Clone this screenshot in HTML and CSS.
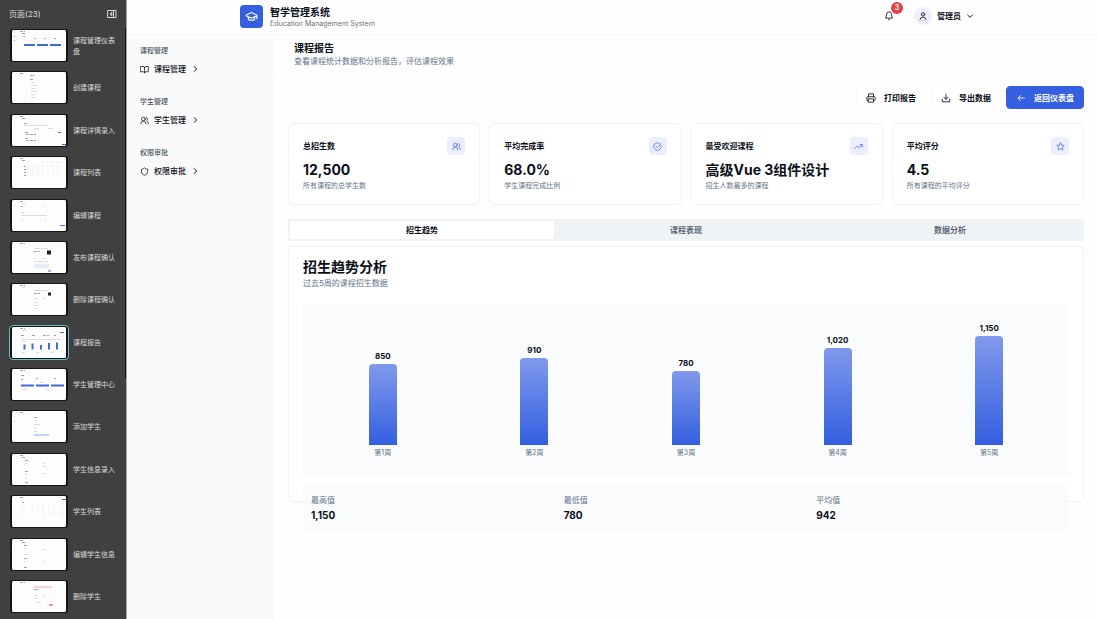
FILE: index.html
```html
<!DOCTYPE html>
<html lang="zh-CN">
<head>
  <meta charset="UTF-8">
  <meta name="viewport" content="width=device-width, initial-scale=1">
  <title>课程报告</title>
  <link rel="stylesheet" href="styles.css">
</head>
<body>
  <aside class="pages">
    <div class="pages-head">
      <span>页面(23)</span>
      <button class="icon-btn" aria-label="收起">
        <svg width="10" height="10" viewBox="0 0 10 10"><path d="M1 1.500h8v7H1zM6.500 1.500v7M4.500 3.500 3 5l1.500 1.500z"/></svg>
      </button>
    </div>
    <nav class="pages-list">
      <a href="#" class="page-item">
        <svg class="thumb" viewBox="0 0 54 30"><path class="ink" d="M8 1h5M10 3h3M11 6h2M22 8h2M32 8h2M42 8h2M2 6h1M2 10h1"/><path class="blue wide" d="M12 14.500h11M25 14.500h11M38 14.500h11"/></svg>
        <span>课程管理仪表盘</span>
      </a>
      <a href="#" class="page-item">
        <svg class="thumb" viewBox="0 0 54 30"><path class="ink" d="M8 1h4M18 3h5M18 7h3"/><path class="pale" d="M19 10h4M19 13h6M19 16h4M19 19h6M19 22h4M19 25h5"/></svg>
        <span>创建课程</span>
      </a>
      <a href="#" class="page-item">
        <svg class="thumb" viewBox="0 0 54 30"><path class="ink" d="M8 1h4M10 3h3M12 8h3M13 17h3M14 19h10M13 23h3M14 25h10"/><path class="pale" d="M2 6h1M2 11h1M12 10h24M22 13h5M36 13h5"/><path class="blue" d="M46 17h3M50 29h4"/></svg>
        <span>课程详情录入</span>
      </a>
      <a href="#" class="page-item">
        <svg class="thumb" viewBox="0 0 54 30"><path class="ink" d="M8 1h4M10 3h3M12 9h2M12 12h2M12 15h2M12 18h2"/><path class="pale cols" d="M16 8v11M21 8v10M26 8v11M31 8v10M36 8v11M41 8v10M46 8v9M35 5h14"/></svg>
        <span>课程列表</span>
      </a>
      <a href="#" class="page-item">
        <svg class="thumb" viewBox="0 0 54 30"><path class="ink" d="M8 1h4M9 6h2"/><path class="pale" d="M2 5h1M10 3h3M9 15h26M9 20h2M32 6h2M32 20h2M9 12h3"/><path class="blue" d="M48 25h5"/></svg>
        <span>编辑课程</span>
      </a>
      <a href="#" class="page-item">
        <svg class="thumb" viewBox="0 0 54 30"><path class="ink" d="M8 1h5M22 9h6"/><path class="pale" d="M2 5h1M22 6h14M22 16h2M31 16h2M22 19h14M2 10h1"/><path class="panel" d="M22 21h15v5H22z"/><path class="block" d="M35 8h4v4h-4z"/><path class="blue" d="M36 28.500h3"/></svg>
        <span>发布课程确认</span>
      </a>
      <a href="#" class="page-item">
        <svg class="thumb" viewBox="0 0 54 30"><path class="ink" d="M8 1h5M22 9h6"/><path class="pale" d="M10 3h3M22 6h14M22 14h3M31 14h2M22 18h4M22 21h5M22 24h3M2 7h1"/><path class="block" d="M36 8h3v3h-3z"/></svg>
        <span>删除课程确认</span>
      </a>
      <a href="#" class="page-item current" aria-current="page">
        <svg class="thumb" viewBox="0 0 54 30"><path class="ink" d="M8 1h5M9 8h3M20 8h3M31 8h6M42 8h2"/><path class="pale" d="M10 3h5M9 12h40M10 14h4"/><path class="blue" d="M48 5h4"/><path class="blue wide" d="M12.500 17v5M20.500 16v6M29 17.500v4.500M37 15.500v6.500M45 15v7"/><path class="pale" d="M10 25h3M24 25h3M39 25h3"/></svg>
        <span>课程报告</span>
      </a>
      <a href="#" class="page-item">
        <svg class="thumb" viewBox="0 0 54 30"><path class="ink" d="M8 1h5M9 6h3M9 10h2M24 9h2M42 9h2"/><path class="pale" d="M2 5h1M2 10h1M10 20h5M34 20h3M28 13h4"/><path class="blue wide" d="M9 16h13M24 16h13M39 16h13"/></svg>
        <span>学生管理中心</span>
      </a>
      <a href="#" class="page-item">
        <svg class="thumb" viewBox="0 0 54 30"><path class="ink" d="M8 1h4M22 6h4"/><path class="pale" d="M2 5h1M2 10h1M10 3h3M22 9h3M22 13h6M22 17h3M22 20h3"/><path class="sky" d="M22 23.500h15"/></svg>
        <span>添加学生</span>
      </a>
      <a href="#" class="page-item">
        <svg class="thumb" viewBox="0 0 54 30"><path class="ink" d="M8 1h4M10 3h3M13 6h3M13 17h3M13 28h3"/><path class="pale" d="M2 6h1M13 9h2M31 9h2M31 12h4M13 20h2M31 19h3M13 24h2"/></svg>
        <span>学生信息录入</span>
      </a>
      <a href="#" class="page-item">
        <svg class="thumb" viewBox="0 0 54 30"><path class="ink" d="M8 1h4M10 6h2"/><path class="pale cols" d="M10 9v11M20 9v10M26 9v9M31 9v10M37 9v10M42 9v9M48 9v10M51 9v10"/><path class="blue" d="M50 3h4"/></svg>
        <span>学生列表</span>
      </a>
      <a href="#" class="page-item">
        <svg class="thumb" viewBox="0 0 54 30"><path class="ink" d="M8 1h4M10 3h3M12 6h3M12 19h3M12 28h3"/><path class="pale" d="M2 6h1M2 10h1M12 9h2M31 10h3M12 15h4M12 22h2M31 22h2"/></svg>
        <span>编辑学生信息</span>
      </a>
      <a href="#" class="page-item">
        <svg class="thumb" viewBox="0 0 54 30"><path class="ink" d="M8 1h5M22 8h5"/><path class="pale" d="M2 5h1M22 14h3M31 14h2M23 17h3M24 21h5"/><path class="pink" d="M22 5.500h18"/><path class="red" d="M37 23.500h4"/></svg>
        <span>删除学生</span>
      </a>
    </nav>
    <span class="pages-scroll"></span>
  </aside>

  <div class="app">
    <header class="topbar">
      <div class="brand">
        <span class="logo">
          <svg width="13" height="13" viewBox="0 0 24 24"><path d="M21.400 10.900a1 1 0 0 0 0-1.800L12.800 5.200a2 2 0 0 0-1.700 0L2.600 9.100a1 1 0 0 0 0 1.800l8.600 3.900a2 2 0 0 0 1.700 0zM22 10v6M6 12.500V16c0 1.700 2.700 3 6 3s6-1.300 6-3v-3.500"/></svg>
        </span>
        <div class="brand-text">
          <div class="brand-name">智学管理系统</div>
          <div class="brand-sub">Education Management System</div>
        </div>
      </div>
      <div class="user-area">
        <button class="icon-btn bell" aria-label="通知">
          <svg width="10" height="10" viewBox="0 0 24 24"><path d="M6 8a6 6 0 0 1 12 0c0 7 3 9 3 9H3s3-2 3-9M10.300 21a2 2 0 0 0 3.400 0"/></svg>
          <span class="badge">3</span>
        </button>
        <button class="user">
          <span class="avatar"><svg width="10" height="10" viewBox="0 0 24 24"><circle cx="12" cy="8" r="4"/><path d="M5 21v-1a6 6 0 0 1 6-5h2a6 6 0 0 1 6 5v1"/></svg></span>
          管理员
          <svg class="chevron" width="8" height="8" viewBox="0 0 24 24"><path d="m5 9 7 7 7-7"/></svg>
        </button>
      </div>
    </header>

    <div class="body">
      <nav class="sidebar">
        <section class="group">
          <h2>课程管理</h2>
          <a href="#">
            <svg width="9" height="9" viewBox="0 0 24 24"><path d="M12 7v14M2 4h6a4 4 0 0 1 4 4 4 4 0 0 1 4-4h6v14h-7a3 3 0 0 0-3 3 3 3 0 0 0-3-3H2z"/></svg>
            课程管理
            <svg class="chevron" width="8" height="8" viewBox="0 0 24 24"><path d="m10 5 7 7-7 7"/></svg>
          </a>
        </section>
        <section class="group">
          <h2>学生管理</h2>
          <a href="#">
            <svg width="9" height="9" viewBox="0 0 24 24"><path d="M2 21a7 7 0 0 1 14 0M22 20c0-3.400-2-6.500-4-8a5 5 0 0 0-.5-8.300"/><circle cx="9" cy="8" r="5"/></svg>
            学生管理
            <svg class="chevron" width="8" height="8" viewBox="0 0 24 24"><path d="m10 5 7 7-7 7"/></svg>
          </a>
        </section>
        <section class="group">
          <h2>权限审批</h2>
          <a href="#">
            <svg width="9" height="9" viewBox="0 0 24 24"><path d="M20 13c0 5-3.500 7.500-8 9-4.500-1.500-8-4-8-9V6c3 0 6-1.500 8-4 2 2.500 5 4 8 4z"/></svg>
            权限审批
            <svg class="chevron" width="8" height="8" viewBox="0 0 24 24"><path d="m10 5 7 7-7 7"/></svg>
          </a>
        </section>
      </nav>

      <main class="main">
        <div class="page-head">
          <h1>课程报告</h1>
          <p>查看课程统计数据和分析报告，评估课程效果</p>
        </div>

        <div class="content">
          <div class="actions">
            <button class="btn">
              <svg width="10" height="10" viewBox="0 0 24 24"><path d="M6 18H4a2 2 0 0 1-2-2v-5a2 2 0 0 1 2-2h16a2 2 0 0 1 2 2v5a2 2 0 0 1-2 2h-2M6 9V2h12v7M6 14h12v8H6z"/></svg>
              打印报告
            </button>
            <button class="btn">
              <svg width="10" height="10" viewBox="0 0 24 24"><path d="M21 15v6H3v-6M7 10l5 5 5-5M12 15V3"/></svg>
              导出数据
            </button>
            <button class="btn btn-primary">
              <svg width="10" height="10" viewBox="0 0 24 24"><path d="m11 18-6-6 6-6M20 12H5"/></svg>
              返回仪表盘
            </button>
          </div>

          <div class="stats">
            <div class="card stat">
              <div class="stat-head">
                <h3>总招生数</h3>
                <span class="stat-icon"><svg width="9" height="9" viewBox="0 0 24 24"><path d="M2 21a7 7 0 0 1 14 0M22 20c0-3.400-2-6.500-4-8a5 5 0 0 0-.5-8.300"/><circle cx="9" cy="8" r="5"/></svg></span>
              </div>
              <div class="stat-value">12,500</div>
              <p>所有课程的总学生数</p>
            </div>
            <div class="card stat">
              <div class="stat-head">
                <h3>平均完成率</h3>
                <span class="stat-icon"><svg width="9" height="9" viewBox="0 0 24 24"><path d="M21.800 10A10 10 0 1 1 17 3.300M8 11l4 4L22 4"/></svg></span>
              </div>
              <div class="stat-value">68.0%</div>
              <p>学生课程完成比例</p>
            </div>
            <div class="card stat">
              <div class="stat-head">
                <h3>最受欢迎课程</h3>
                <span class="stat-icon"><svg width="9" height="9" viewBox="0 0 24 24"><path d="m2 17 6.500-6.500 5 5L22 7M16 7h6v6"/></svg></span>
              </div>
              <div class="stat-value">高级Vue 3组件设计</div>
              <p>招生人数最多的课程</p>
            </div>
            <div class="card stat">
              <div class="stat-head">
                <h3>平均评分</h3>
                <span class="stat-icon"><svg width="9" height="9" viewBox="0 0 24 24"><path d="m12 2 3.100 6.300 6.900 1-5 4.900 1.200 6.800-6.200-3.200L5.800 21 7 14.200 2 9.300l6.900-1z"/></svg></span>
              </div>
              <div class="stat-value">4.5</div>
              <p>所有课程的平均评分</p>
            </div>
          </div>

          <div class="tabs" role="tablist">
            <button role="tab" class="tab active" aria-selected="true">招生趋势</button>
            <button role="tab" class="tab" aria-selected="false">课程表现</button>
            <button role="tab" class="tab" aria-selected="false">数据分析</button>
          </div>

          <section class="card trend">
            <h2>招生趋势分析</h2>
            <p>过去5周的课程招生数据</p>
            <div class="chart">
              <div class="col"><b>850</b><span class="bar" style="height: 81px"></span><span>第1周</span></div>
              <div class="col"><b>910</b><span class="bar" style="height: 87px"></span><span>第2周</span></div>
              <div class="col"><b>780</b><span class="bar" style="height: 74px"></span><span>第3周</span></div>
              <div class="col"><b>1,020</b><span class="bar" style="height: 97px"></span><span>第4周</span></div>
              <div class="col"><b>1,150</b><span class="bar" style="height: 109px"></span><span>第5周</span></div>
            </div>
            <dl class="summary">
              <div><dt>最高值</dt><dd>1,150</dd></div>
              <div><dt>最低值</dt><dd>780</dd></div>
              <div><dt>平均值</dt><dd>942</dd></div>
            </dl>
          </section>
        </div>
      </main>
    </div>
  </div>
</body>
</html>
```

FILE: styles.css
```css
* {
  box-sizing: border-box;
}

body {
  display: flex;
  height: 100vh;
  margin: 0;
  overflow: hidden;
  background: #fefefe;
  color: #0b0f19;
  font-family: Inter, "Noto Sans CJK SC", sans-serif;
  font-size: 8px;
  line-height: 12px;
}

h1, h2, h3, p, dl, dd {
  margin: 0;
}

a {
  color: inherit;
  text-decoration: none;
}

button {
  padding: 0;
  border: 0;
  background: none;
  color: inherit;
  font: inherit;
  cursor: pointer;
}

svg {
  flex: none;
  fill: none;
  stroke: currentColor;
  stroke-width: 2;
  stroke-linecap: round;
  stroke-linejoin: round;
}

.icon-btn {
  display: flex;
}

.chevron {
  stroke-width: 3;
}

/* page list */
.pages {
  position: relative;
  display: flex;
  flex-direction: column;
  flex: none;
  width: 127px;
  padding: 0 9px 6px;
  border-right: 1px solid #a5a5a5;
  background: #404040;
  color: #d8d8d8;
}

.pages-head {
  display: flex;
  align-items: center;
  justify-content: space-between;
  height: 27px;
  flex: none;
}

.pages-head svg {
  stroke-width: 1;
}

.pages-list {
  display: flex;
  flex: 1;
  flex-direction: column;
  justify-content: space-between;
  padding-top: 2px;
}

.page-item {
  display: flex;
  align-items: center;
  gap: 5px;
  padding-left: 1px;
  font-size: 7px;
  line-height: 11px;
}

.page-item span {
  width: 44px;
}

.thumb {
  width: 58px;
  height: 33px;
  padding: 1px 2px;
  border-radius: 3px;
  background: linear-gradient(#fdfdfd, #fdfdfd) content-box, #151515;
  stroke-width: 1;
  stroke-linecap: butt;
  stroke-linejoin: miter;
}

.current .thumb {
  outline: 1px solid #5cc3cb;
}

.ink { stroke: #a2a2a2; stroke-dasharray: 3 1; }
.pale { stroke: #dcdcdf; }
.cols { stroke-dasharray: 1 2; }
.blue { stroke: #4169e1; }
.wide { stroke-width: 2; }
.sky { stroke: #86abe6; }
.pink { stroke: #f4a6b0; }
.red { stroke: #e0394d; }
.panel { fill: #e7eefb; stroke: none; }
.block { fill: #222; stroke: none; }

.pages-scroll {
  position: absolute;
  top: 28px;
  right: 0;
  width: 1px;
  height: 350px;
  background: #111;
}

/* top bar */
.app {
  display: flex;
  flex: 1;
  flex-direction: column;
  min-width: 0;
}

.topbar {
  display: flex;
  flex: none;
  align-items: center;
  justify-content: space-between;
  height: 35px;
  padding: 0 124px 2px 113px;
  border-bottom: 1px solid #f5f6f8;
}

.brand {
  display: flex;
  align-items: center;
  gap: 7px;
}

.brand-text {
  padding-top: 4px;
}

.logo {
  display: grid;
  place-items: center;
  width: 23px;
  height: 23px;
  border-radius: 4px;
  background: #335fe0;
  color: #fff;
}

.brand-name {
  font-size: 10px;
  font-weight: 700;
}

.brand-sub {
  color: #6b7280;
  font-size: 7px;
}

.user-area,
.user {
  display: flex;
  align-items: center;
}

.user-area {
  gap: 20px;
}

.user {
  gap: 5px;
  font-weight: 600;
}

.bell {
  position: relative;
}

.badge {
  position: absolute;
  top: -9px;
  left: 7px;
  width: 12px;
  height: 12px;
  border-radius: 50%;
  background: #dc4446;
  color: #fff;
  font-size: 7px;
  font-weight: 600;
}

.avatar {
  display: grid;
  place-items: center;
  width: 18px;
  height: 18px;
  border-radius: 50%;
  background: #eeeffb;
}

/* side menu */
.body {
  display: flex;
  flex: 1;
  min-height: 0;
}

.sidebar {
  flex: none;
  width: 147px;
  padding: 10px 13px;
  background: #fafafa;
}

.group {
  height: 51px;
}

.group h2 {
  color: #4b5563;
  font-size: 7px;
  font-weight: 500;
}

.group a {
  display: flex;
  align-items: center;
  gap: 5px;
  margin-top: 6px;
  font-weight: 500;
}

/* main */
.main {
  flex: 1;
  min-width: 0;
}

.page-head {
  height: 39px;
  padding: 6px 20px;
  border-bottom: 1px solid #fafafb;
}

.page-head h1 {
  font-size: 10px;
  line-height: 14px;
}

.page-head p,
.trend p {
  color: #64748b;
}

.content {
  padding: 12px 14px;
}

.actions {
  display: flex;
  justify-content: flex-end;
  gap: 5px;
}

.btn {
  display: flex;
  align-items: center;
  gap: 8px;
  height: 23px;
  padding: 0 9px;
  border: 1px solid #f8f9fa;
  border-radius: 4px;
  background: #fff;
  font-weight: 600;
}

.btn-primary {
  border-color: #335fe0;
  background: #335fe0;
  color: #fff;
}

.card {
  border: 1px solid #f0f1f4;
  border-radius: 5px;
  background: #fff;
}

.stats {
  display: grid;
  grid-template-columns: repeat(4, 1fr);
  gap: 9px;
  margin-top: 14px;
}

.stat {
  padding: 13px 14px 12px;
}

.stat-head {
  display: flex;
  align-items: center;
  justify-content: space-between;
}

.stat-head h3 {
  font-size: 8px;
  font-weight: 600;
}

.stat-icon {
  display: grid;
  place-items: center;
  width: 18px;
  height: 18px;
  border-radius: 4px;
  background: #ebeefc;
  color: #4a6be3;
}

.stat-value {
  margin-top: 5px;
  font-size: 14px;
  font-weight: 700;
  line-height: 20px;
}

.stat p {
  color: #64748b;
  font-size: 7px;
}

.tabs {
  display: grid;
  grid-template-columns: repeat(3, 1fr);
  margin-top: 14px;
  padding: 2px;
  background: #eff3f6;
}

.tab {
  height: 18px;
  color: #5b677a;
  font-weight: 600;
}

.tab.active {
  border-radius: 2px;
  background: #fff;
  color: #0b0f19;
}

/* the summary row runs past the bottom of this card */
.trend {
  height: 256px;
  margin-top: 5px;
  padding: 10px 14px;
}

.trend h2 {
  font-size: 14px;
  line-height: 20px;
}

.chart {
  display: grid;
  grid-template-columns: repeat(5, 1fr);
  align-items: end;
  height: 171px;
  margin-top: 15px;
  padding: 0 4px 16px;
  background: #fafbfd;
}

.col {
  display: flex;
  flex-direction: column;
  align-items: center;
  gap: 2px;
  color: #64748b;
  font-size: 7px;
}

.col b {
  color: #0b0f19;
  font-size: 8px;
}

.bar {
  width: 28px;
  border-radius: 4px 4px 0 0;
  background: linear-gradient(#8099eb, #335fe0);
}

.summary {
  display: grid;
  grid-template-columns: repeat(3, 1fr);
  gap: 8px;
  margin-top: 11px;
  padding: 8px;
  background: rgba(247, 249, 252, 0.7);
}

.summary dt {
  color: #64748b;
}

.summary dd {
  font-size: 10px;
  font-weight: 700;
  line-height: 18px;
}
```
